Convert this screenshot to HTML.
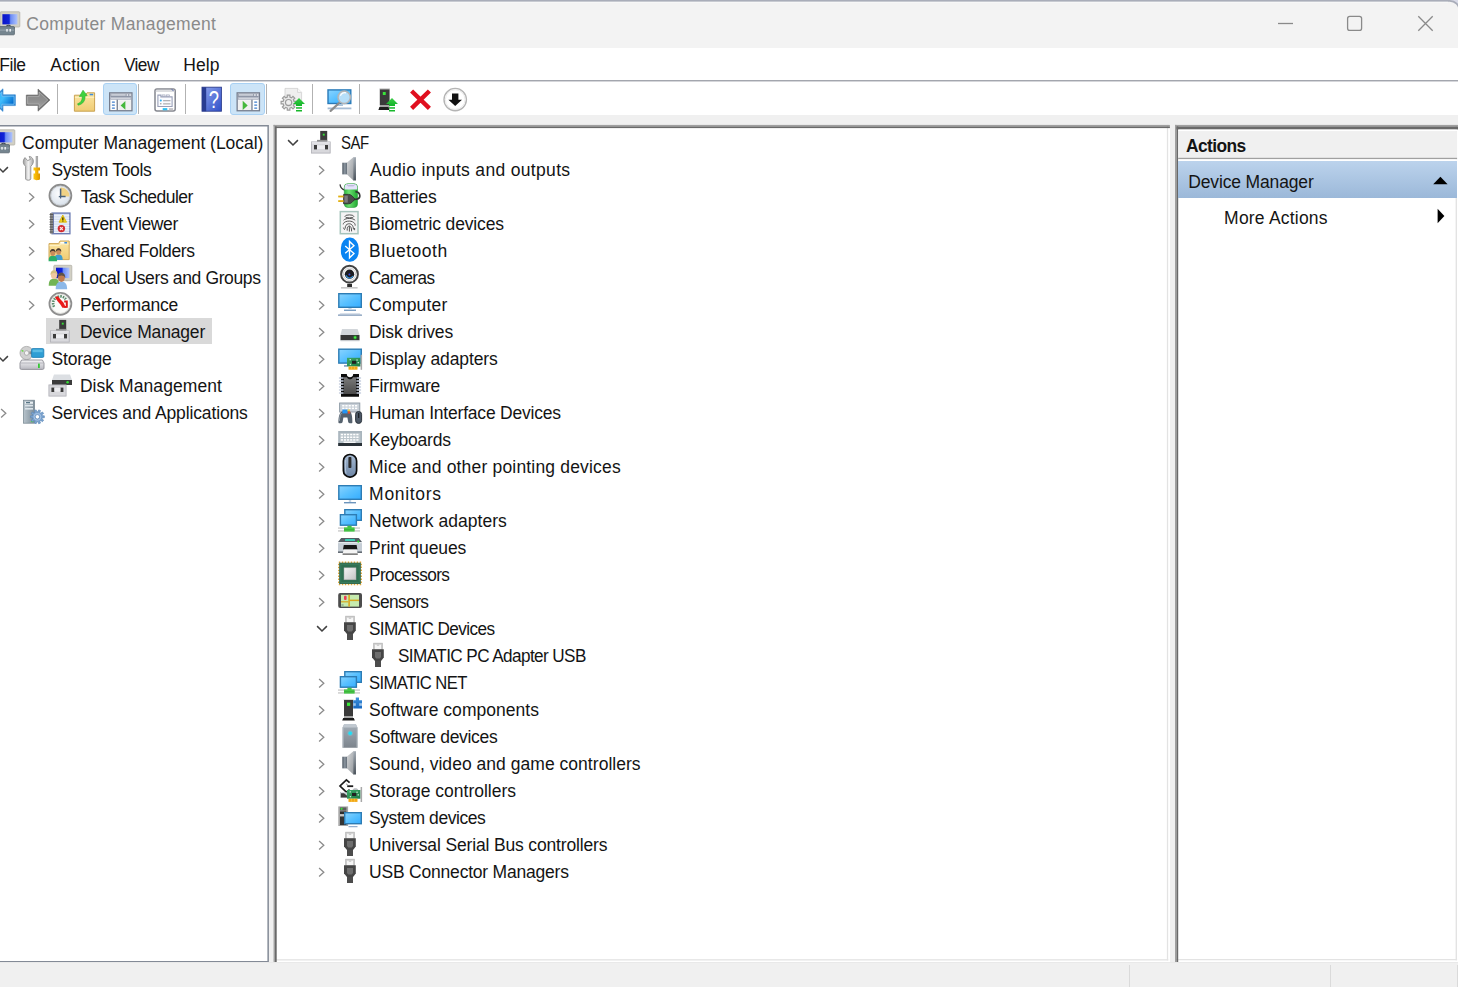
<!DOCTYPE html>
<html lang="en"><head><meta charset="utf-8"><title>Computer Management</title>
<style>
html,body{margin:0;padding:0}
body{width:1458px;height:987px;overflow:hidden;background:#f0f0f0;position:relative;font-family:"Liberation Sans",sans-serif;font-size:17.5px;color:#141414;line-height:27px}
div,svg,span{position:absolute;box-sizing:border-box}
.t{white-space:nowrap;height:27px}
svg{overflow:visible}
.pane{background:#fff}
.sep{width:1px;background:#b2b2b2;top:84px;height:30px}
.chev{fill:none;stroke:#8b8b8b;stroke-width:1.3}
.chevd{fill:none;stroke:#404040;stroke-width:1.5}
</style></head><body>

<svg width="0" height="0" style="left:0;top:0"><defs><linearGradient id="gBlue" gradientUnits="userSpaceOnUse" x1="-4" y1="92" x2="13" y2="104"><stop offset="0" stop-color="#34b0f8"/><stop offset="0.45" stop-color="#40bcfc"/><stop offset="1" stop-color="#0068cc"/></linearGradient><linearGradient id="gGray" x1="0" y1="0" x2="0" y2="1"><stop offset="0" stop-color="#8a8a8a"/><stop offset="0.5" stop-color="#8e8e8e"/><stop offset="1" stop-color="#a2a2a2"/></linearGradient><linearGradient id="gFold" x1="0" y1="0" x2="0" y2="1"><stop offset="0" stop-color="#fbe6a4"/><stop offset="1" stop-color="#f0cc74"/></linearGradient><linearGradient id="gHelp" x1="0" y1="0" x2="1" y2="1"><stop offset="0" stop-color="#8ea4ee"/><stop offset="1" stop-color="#3050c8"/></linearGradient><linearGradient id="gScr" x1="0" y1="0" x2="1" y2="1"><stop offset="0" stop-color="#8ad4ff"/><stop offset="0.5" stop-color="#58c0ff"/><stop offset="1" stop-color="#34acff"/></linearGradient><linearGradient id="gGreenA" x1="0" y1="0" x2="0" y2="1"><stop offset="0" stop-color="#3ccc48"/><stop offset="1" stop-color="#12b428"/></linearGradient><linearGradient id="gCrt" x1="0" y1="0" x2="1" y2="0"><stop offset="0" stop-color="#0a14c8"/><stop offset="0.45" stop-color="#1024d8"/><stop offset="0.55" stop-color="#6c8cf4"/><stop offset="1" stop-color="#b0c4fc"/></linearGradient><linearGradient id="gMetal" x1="0" y1="0" x2="1" y2="0"><stop offset="0" stop-color="#9c9c9c"/><stop offset="0.5" stop-color="#f2f2f2"/><stop offset="1" stop-color="#a8a8a8"/></linearGradient><linearGradient id="gYel" x1="0" y1="0" x2="1" y2="0"><stop offset="0" stop-color="#f8c818"/><stop offset="0.5" stop-color="#f4b000"/><stop offset="1" stop-color="#d89400"/></linearGradient><radialGradient id="gFace" cx="0.45" cy="0.4" r="0.7"><stop offset="0" stop-color="#fdfdfe"/><stop offset="1" stop-color="#cfdae6"/></radialGradient><linearGradient id="gTower" x1="0" y1="0" x2="1" y2="0"><stop offset="0" stop-color="#b8c4cc"/><stop offset="1" stop-color="#7c8c98"/></linearGradient><linearGradient id="gHdd" x1="0" y1="0" x2="0" y2="1"><stop offset="0" stop-color="#f4f4f6"/><stop offset="1" stop-color="#b8b8c0"/></linearGradient><linearGradient id="gSpkB" x1="0" y1="0" x2="1" y2="0"><stop offset="0" stop-color="#4e5862"/><stop offset="0.5" stop-color="#8c96a0"/><stop offset="1" stop-color="#5c6670"/></linearGradient><linearGradient id="gSpkC" x1="0" y1="0" x2="1" y2="1"><stop offset="0" stop-color="#d4d6d8"/><stop offset="1" stop-color="#989ca0"/></linearGradient><linearGradient id="gSpkR" x1="0" y1="0" x2="0" y2="1"><stop offset="0" stop-color="#a4acb4"/><stop offset="1" stop-color="#4c545c"/></linearGradient><linearGradient id="gBat" x1="0" y1="0" x2="1" y2="0"><stop offset="0" stop-color="#2eb83e"/><stop offset="0.35" stop-color="#6ce070"/><stop offset="1" stop-color="#22a832"/></linearGradient><linearGradient id="gChip" x1="0" y1="0" x2="0" y2="1"><stop offset="0" stop-color="#7a7a7a"/><stop offset="1" stop-color="#4a4a4a"/></linearGradient><linearGradient id="gMouse" x1="0" y1="0" x2="0" y2="1"><stop offset="0" stop-color="#a8bcd4"/><stop offset="1" stop-color="#6c84a4"/></linearGradient><linearGradient id="gSilver" x1="0" y1="0" x2="1" y2="1"><stop offset="0" stop-color="#f4f4f4"/><stop offset="1" stop-color="#c4c4c4"/></linearGradient><linearGradient id="gSwd" x1="0" y1="0" x2="0" y2="1"><stop offset="0" stop-color="#a4aeb8"/><stop offset="1" stop-color="#7c848c"/></linearGradient><linearGradient id="gPuz" x1="0" y1="0" x2="0" y2="1"><stop offset="0" stop-color="#3c90dc"/><stop offset="1" stop-color="#1868c0"/></linearGradient><linearGradient id="gPcb" x1="0" y1="0" x2="1" y2="1"><stop offset="0" stop-color="#3ca868"/><stop offset="1" stop-color="#1c7c44"/></linearGradient></defs></svg>
<svg style="left:0;top:0" width="1458" height="48" viewBox="0 0 1458 48"><rect x="1440" y="0" width="18" height="12" fill="#d9dbe8"/><rect x="-20" y="0.9" width="1479.4" height="60" rx="9.6" fill="#f3f3f3" stroke="#a9adb9" stroke-width="1.8"/><rect x="0" y="1.8" width="1448" height="0.8" fill="#fafafa"/></svg>
<div class="t" style="left:26.36px;top:11px;letter-spacing:0.313px;color:#8a8a8a;">Computer Management</div>
<svg style="left:-3.2px;top:12px" width="24" height="24" viewBox="0 0 24 24"><rect x="3.2" y="-0.2" width="19.6" height="15.2" rx="0.8" fill="#d2d0c4" stroke="#b4b2a8" stroke-width="0.8"/><rect x="5.4" y="2.1999999999999997" width="15.000000000000002" height="10.2" fill="url(#gCrt)"/><rect x="13" y="15" width="5" height="1.6" fill="#8c8c84"/><path d="M9.5 14.6C9.5 12.8 13.5 12.8 13.5 14.6" fill="none" stroke="#3c4650" stroke-width="1.2"/><rect x="0" y="14.6" width="17.4" height="8.2" rx="0.8" fill="#75858f" stroke="#55636d" stroke-width="0.8"/><rect x="0.4" y="17.6" width="16.6" height="1" fill="#9aa8b2"/><rect x="9.2" y="17" width="1.6" height="2.6" fill="#e8ecef"/><rect x="12.4" y="17" width="1.6" height="2.6" fill="#e8ecef"/></svg>
<svg style="left:1270px;top:8px" width="180" height="32" viewBox="1270 8 180 32"><g fill="none" stroke="#8a8a8a" stroke-width="1.3"><path d="M1278 23.5H1293"/><rect x="1347.6" y="16.4" width="14" height="14" rx="2.2"/><path d="M1418.3 16.3L1432.7 30.7M1432.7 16.3L1418.3 30.7"/></g></svg>
<div style="left:0;top:47.5px;width:1458px;height:33px;background:#fff"></div>
<div class="t" style="left:-0.80px;top:52px;letter-spacing:-0.44px;">File</div>
<div class="t" style="left:50.36px;top:52px;letter-spacing:0.176px;">Action</div>
<div class="t" style="left:124.04px;top:52px;letter-spacing:-0.6px;transform:scaleX(0.9872);transform-origin:0 0;">View</div>
<div class="t" style="left:183.34px;top:52px;letter-spacing:0.029px;">Help</div>
<div style="left:0;top:80px;width:1458px;height:2px;background:linear-gradient(#a3a6ae 0,#a3a6ae 55%,#d5d6da 55%)"></div>
<div style="left:0;top:82px;width:1458px;height:33px;background:#fff"></div>
<div class="sep" style="left:57px"></div>
<div class="sep" style="left:138px"></div>
<div class="sep" style="left:185px"></div>
<div class="sep" style="left:266.3px"></div>
<div class="sep" style="left:312.2px"></div>
<div class="sep" style="left:359.2px"></div>
<div style="left:102.5px;top:83px;width:34.2px;height:32px;background:#cce4f7;border:1px solid #a9d1f3;border-radius:3px"></div>
<div style="left:230px;top:83px;width:34.5px;height:32px;background:#cce4f7;border:1px solid #a9d1f3;border-radius:3px"></div>
<svg style="left:-10.0px;top:88.0px" width="26.0" height="24.0" viewBox="-10 88 26 24"><path d="M-9.4 100L3 88.8V94.8H15.4V105.6H3V111.4Z" fill="#3186d2" stroke="#3186d2" stroke-width="0.6" stroke-linejoin="round"/><path d="M-7.2 100L1.9 91.9V96.2H14V104.2H1.9V108.3Z" fill="url(#gBlue)" stroke="#7cc8f8" stroke-width="0.8"/></svg>
<svg style="left:25.0px;top:88.0px" width="26.0" height="24.0" viewBox="25 88 26 24"><path d="M50 100L38 89V95H26.3V105.4H38V111.2Z" fill="#6c6c6c" stroke="#6c6c6c" stroke-width="0.6" stroke-linejoin="round"/><path d="M47.8 100L39.1 92.1V96.3H27.6V104.1H39.1V108.1Z" fill="url(#gGray)" stroke="#b4b4b4" stroke-width="0.8"/></svg>
<svg style="left:73.0px;top:88.0px" width="24.0" height="25.0" viewBox="73 88 24 25"><path d="M74.4 95.2H85.5L87 92.8H94.6V111.2H74.4Z" fill="url(#gFold)" stroke="#c9a252" stroke-width="1"/><path d="M74.9 97.3H94.2" stroke="#fdf0c4" stroke-width="1"/><rect x="89.6" y="93.8" width="3.6" height="1.5" fill="#3c8ce0"/><path d="M77.6 103.8C81.2 102.6 82.6 99.6 82 96.2L79.4 96.6L83 90.2L87.2 95.6L84.9 95.9C85.6 100.8 82.6 104.2 78.2 105.2Z" fill="#3fd23f" stroke="#2cae2c" stroke-width="0.6"/></svg>
<svg style="left:108.5px;top:92.0px" width="24.0" height="19.5" viewBox="108.5 92 24 19.5"><rect x="109.15" y="92.85000000000001" width="22.3" height="17.9" fill="#fff" stroke="#747c8c" stroke-width="1.3"/><rect x="109.8" y="93.5" width="21" height="3.6" fill="#8f96a6"/><rect x="110.7" y="94.4" width="14.5" height="1.1" fill="#eef0f4"/><rect x="126.1" y="94.2" width="1.6" height="1.6" fill="#eef0f4"/><rect x="128.8" y="94.2" width="1.6" height="1.6" fill="#eef0f4"/><rect x="109.8" y="97.10000000000001" width="21" height="2.6" fill="#a4aaba"/><rect x="110.5" y="97.8" width="19.6" height="0.9" fill="#e4e6ec"/><rect x="116.1" y="99.7" width="1.3" height="10.6" fill="#747c8c"/><rect x="111.3" y="101.4" width="3.2" height="1.3" rx="0.6" fill="#3c7ccc"/><rect x="111.3" y="104.4" width="3.2" height="1.3" rx="0.6" fill="#3c7ccc"/><rect x="111.3" y="107.4" width="3.2" height="1.3" rx="0.6" fill="#3c7ccc"/><rect x="117.9" y="100.2" width="12.6" height="9.8" fill="#f0f0f0"/><path d="M120.1 105.4L124.9 101.0V109.80000000000001Z" fill="#45b83c"/></svg>
<svg style="left:153.5px;top:87.5px" width="23.0" height="24.0" viewBox="153.5 87.5 23 24"><rect x="154.5" y="88.5" width="20.2" height="22" rx="2" fill="#fff" stroke="#84868e" stroke-width="1.5"/><rect x="155.3" y="89.3" width="18.6" height="2.2" fill="#dcdde0"/><path d="M171 88.4L173 90.6" stroke="#5a6aa8" stroke-width="1"/><path d="M157.4 106V94.6H160.4V96.4H171.6V106Z" fill="#fafbff" stroke="#9aa0b8" stroke-width="1.1"/><rect x="161.6" y="94.4" width="3" height="1.4" fill="#e8e8ee" stroke="#9aa0b8" stroke-width="0.6"/><rect x="166" y="94.4" width="3" height="1.4" fill="#e8e8ee" stroke="#9aa0b8" stroke-width="0.6"/><circle cx="160.3" cy="100.1" r="1" fill="#28b0f4"/><circle cx="160.3" cy="103.3" r="0.8" fill="#9a9a9a"/><rect x="162.6" y="99.5" width="7.4" height="1.3" fill="#b2b2b6"/><rect x="162.6" y="102.7" width="7.4" height="1.3" fill="#b2b2b6"/><rect x="162.2" y="107.6" width="4.6" height="2.2" fill="#30c0f4"/><rect x="168.4" y="107.6" width="4.2" height="2.2" fill="#c4c4c8"/></svg>
<svg style="left:201.5px;top:87.0px" width="20.0" height="24.5" viewBox="201.5 87 20 24.5"><rect x="201.5" y="87.2" width="19.4" height="24" fill="url(#gHelp)"/><rect x="201.5" y="87.2" width="4.2" height="24" fill="#283c92"/><rect x="201.5" y="87.2" width="19.4" height="24" fill="none" stroke="#2c3c8c" stroke-width="0.9"/><text x="213.3" y="108" font-family="Liberation Sans,sans-serif" font-size="23" fill="#fff" text-anchor="middle" transform="translate(213.2 0) scale(0.8 1) translate(-213.2 0)">?</text></svg>
<svg style="left:235.7px;top:92.0px" width="24.0" height="19.5" viewBox="235.7 92 24 19.5"><rect x="236.85" y="92.85000000000001" width="22.3" height="17.9" fill="#fff" stroke="#747c8c" stroke-width="1.3"/><rect x="237.5" y="93.5" width="21" height="3.6" fill="#8f96a6"/><rect x="238.39999999999998" y="94.4" width="14.5" height="1.1" fill="#eef0f4"/><rect x="253.79999999999998" y="94.2" width="1.6" height="1.6" fill="#eef0f4"/><rect x="256.5" y="94.2" width="1.6" height="1.6" fill="#eef0f4"/><rect x="237.5" y="97.10000000000001" width="21" height="2.6" fill="#a4aaba"/><rect x="238.2" y="97.8" width="19.6" height="0.9" fill="#e4e6ec"/><rect x="251.0" y="99.7" width="1.3" height="10.6" fill="#747c8c"/><rect x="253.79999999999998" y="101.4" width="3.2" height="1.3" rx="0.6" fill="#3c7ccc"/><rect x="253.79999999999998" y="104.4" width="3.2" height="1.3" rx="0.6" fill="#3c7ccc"/><rect x="253.79999999999998" y="107.4" width="3.2" height="1.3" rx="0.6" fill="#3c7ccc"/><rect x="237.79999999999998" y="100.2" width="12.8" height="9.8" fill="#f0f0f0"/><path d="M247.39999999999998 105.4L242.39999999999998 100.8V110.0Z" fill="#45b83c"/></svg>
<svg style="left:281.0px;top:88.0px" width="24.0" height="24.0" viewBox="281 88 24 24"><path d="M285 88.4H297.6L301.6 92.4V105H285Z" fill="#efefef" stroke="#cfcfcf" stroke-width="0.8"/><path d="M297.6 88.4V92.4H301.6" fill="#fafafa" stroke="#cfcfcf" stroke-width="0.8"/><path d="M296.09 101.29L296.09 103.91L294.05 103.91L293.37 105.53L294.82 106.97L292.97 108.82L291.53 107.37L289.91 108.05L289.91 110.09L287.29 110.09L287.29 108.05L285.67 107.37L284.23 108.82L282.38 106.97L283.83 105.53L283.15 103.91L281.11 103.91L281.11 101.29L283.15 101.29L283.83 99.67L282.38 98.23L284.23 96.38L285.67 97.83L287.29 97.15L287.29 95.11L289.91 95.11L289.91 97.15L291.53 97.83L292.97 96.38L294.82 98.23L293.37 99.67L294.05 101.29ZM291.70 102.60A3.1 3.1 0 1 0 285.50 102.60A3.1 3.1 0 1 0 291.70 102.60Z" fill="#e9e9e9" stroke="#9c9c9c" stroke-width="1.2" fill-rule="evenodd"/><path d="M293 104L299 98L305 104H302V106H296V104Z" fill="url(#gGreenA)"/><rect x="296" y="107.2" width="6" height="1.5" fill="#18b82c"/><rect x="296" y="110" width="6" height="1.5" fill="#18b82c"/></svg>
<svg style="left:327.0px;top:88.5px" width="25.0" height="23.0" viewBox="327 88.5 25 23"><rect x="328" y="89.4" width="22.8" height="13.6" fill="url(#gScr)" stroke="#2a7ab8" stroke-width="1.4"/><rect x="327.6" y="107" width="23.8" height="1.8" fill="#a6bcd4"/><rect x="336" y="104" width="7" height="1.2" fill="#88a8c8"/><path d="M339.6 102L330.6 110.4" stroke="#8c8c8c" stroke-width="2.2" stroke-linecap="round"/><circle cx="344.2" cy="96.8" r="6.2" fill="#bfe2f8" fill-opacity="0.92" stroke="#b4b4b4" stroke-width="1.5"/><path d="M340.4 95.2A4.4 4.4 0 0 1 346 92.4" stroke="#fff" stroke-width="1.2" fill="none"/></svg>
<svg style="left:378.0px;top:88.0px" width="20.0" height="24.0" viewBox="378 88 20 24"><rect x="379.8" y="88.8" width="9.8" height="16.2" fill="#3a3a3a"/><rect x="379.4" y="88.4" width="10.6" height="1" fill="#d8d8d8"/><rect x="382.8" y="92" width="2.9" height="3" fill="#39e639"/><rect x="379.8" y="105" width="9.8" height="2" fill="#a4a4a4"/><path d="M379.4 107H388.6L389.4 110H378.4Z" fill="#1e1e1e"/><path d="M386 104L392 98L398 104H395V106H389V104Z" fill="url(#gGreenA)"/><rect x="389" y="107.2" width="6" height="1.5" fill="#18b82c"/><rect x="389" y="110" width="6" height="1.5" fill="#18b82c"/></svg>
<svg style="left:410.0px;top:90.0px" width="21.0" height="20.0" viewBox="410 90 21 20"><path d="M411.6 91L429.4 108.4M429.4 91L411.6 108.4" stroke="#e00f1f" stroke-width="4.4"/></svg>
<svg style="left:442.8px;top:88.0px" width="24.0" height="24.0" viewBox="442.8 88 24 24"><circle cx="455" cy="99.6" r="11.2" fill="#fff" stroke="#b4b4b4" stroke-width="1.4"/><circle cx="455" cy="99.6" r="9.8" fill="none" stroke="#ececec" stroke-width="1"/><path d="M451.8 93.4H458.2V99.8H461.8L455 106L448.2 99.8H451.8Z" fill="#111"/></svg>
<svg style="left:0;top:0" width="1458" height="987" viewBox="0 0 1458 987"><rect x="-5" y="125.75" width="273.15" height="836" fill="#fff" stroke="#838a96" stroke-width="1.5"/><rect x="273.50" y="124.90" width="896.40" height="837.30" fill="#fff"/><rect x="273.50" y="959.20" width="896.40" height="1.50" fill="#e3e3e3"/><rect x="1166.90" y="124.90" width="1.50" height="837.30" fill="#e3e3e3"/><rect x="273.50" y="960.70" width="896.40" height="1.50" fill="#fff"/><rect x="1168.40" y="124.90" width="1.50" height="837.30" fill="#fff"/><rect x="273.50" y="124.90" width="896.40" height="1.50" fill="#a0a0a0"/><rect x="273.50" y="124.90" width="1.50" height="837.30" fill="#a0a0a0"/><rect x="275.00" y="126.40" width="894.90" height="1.70" fill="#696969"/><rect x="275.00" y="126.40" width="1.70" height="835.80" fill="#696969"/><rect x="1175.00" y="124.90" width="283.60" height="837.10" fill="#fff"/><rect x="1175.00" y="959.00" width="283.60" height="1.50" fill="#e3e3e3"/><rect x="1455.60" y="124.90" width="1.50" height="837.10" fill="#e3e3e3"/><rect x="1175.00" y="960.50" width="283.60" height="1.50" fill="#fff"/><rect x="1457.10" y="124.90" width="1.50" height="837.10" fill="#fff"/><rect x="1175.00" y="124.90" width="283.60" height="1.50" fill="#a0a0a0"/><rect x="1175.00" y="124.90" width="1.50" height="837.10" fill="#a0a0a0"/><rect x="1176.50" y="126.40" width="282.10" height="3.10" fill="#696969"/><rect x="1176.50" y="126.40" width="1.70" height="835.60" fill="#696969"/></svg>
<div style="left:46px;top:317.5px;width:166px;height:26.5px;background:#d9d9d9"></div>
<div class="t" style="left:22.12px;top:130px;letter-spacing:-0.035px;">Computer Management (Local)</div>
<svg style="left:-8px;top:130px" width="24" height="24" viewBox="0 0 24 24"><rect x="3.2" y="-0.2" width="19.6" height="15.2" rx="0.8" fill="#d2d0c4" stroke="#b4b2a8" stroke-width="0.8"/><rect x="5.4" y="2.1999999999999997" width="15.000000000000002" height="10.2" fill="url(#gCrt)"/><rect x="13" y="15" width="5" height="1.6" fill="#8c8c84"/><path d="M9.5 14.6C9.5 12.8 13.5 12.8 13.5 14.6" fill="none" stroke="#3c4650" stroke-width="1.2"/><rect x="0" y="14.6" width="17.4" height="8.2" rx="0.8" fill="#75858f" stroke="#55636d" stroke-width="0.8"/><rect x="0.4" y="17.6" width="16.6" height="1" fill="#9aa8b2"/><rect x="9.2" y="17" width="1.6" height="2.6" fill="#e8ecef"/><rect x="12.4" y="17" width="1.6" height="2.6" fill="#e8ecef"/></svg>
<div class="t" style="left:51.58px;top:157px;letter-spacing:-0.315px;">System Tools</div>
<svg style="left:20px;top:157px" width="24" height="24" viewBox="0 0 24 24"><path d="M5.6 9.2C3.2 7.6 2.6 4.4 4 2L5 0.6L7.6 3.6L10.4 2.4L9.2 -0.6C12 -0.4 14 2.6 13.2 5.6C12.8 7.2 12 8.4 10.8 9.2V22C10.8 23.6 5.6 23.6 5.6 22Z" fill="url(#gMetal)" stroke="#8e8e8e" stroke-width="0.9"/><rect x="16" y="-0.5" width="1.8" height="11.2" fill="#b4b4b4" stroke="#8a8a8a" stroke-width="0.5"/><path d="M13.5 10.6H20V13.4H18.4V16.4H20V22C20 23.6 13.5 23.6 13.5 22V16.4H15.1V13.4H13.5Z" fill="url(#gYel)"/></svg>
<svg style="left:-3px;top:163px" width="12" height="12" viewBox="-6 -6 12 12"><path class="chevd" d="M-4.9 -1.9L0 3L4.9 -1.9"/></svg>
<div class="t" style="left:80.70px;top:184px;letter-spacing:-0.544px;">Task Scheduler</div>
<svg style="left:48px;top:184px" width="24" height="24" viewBox="0 0 24 24"><circle cx="12.4" cy="11.6" r="10.9" fill="url(#gFace)" stroke="#8c8c8c" stroke-width="1.9"/><circle cx="12.4" cy="11.6" r="9.6" fill="none" stroke="#c4c8cc" stroke-width="0.8"/><path d="M12.6 12.4V3.2A9.2 9.2 0 0 1 21.6 12.4Z" fill="#f0d284"/><path d="M12.6 4.6V12.6H17.6" fill="none" stroke="#4a627a" stroke-width="1.5"/><path d="M12.6 12.6V14.6M10.8 12.6H12.6" stroke="#4a627a" stroke-width="1.2"/></svg>
<svg style="left:25.5px;top:189px" width="12" height="14" viewBox="-6 -7 12 14"><path class="chev" d="M-2.9 -2.9L1.8 1.3L-2.9 5.5"/></svg>
<div class="t" style="left:79.90px;top:211px;letter-spacing:-0.401px;">Event Viewer</div>
<svg style="left:48px;top:211px" width="24" height="24" viewBox="0 0 24 24"><rect x="3.4" y="1.4" width="19.2" height="22" fill="#6c7cb4"/><rect x="6" y="2.8" width="15.2" height="19.2" fill="#d4dff2"/><rect x="6" y="4.2" width="15.2" height="1" fill="#f0f4fb"/><rect x="6" y="6.6" width="15.2" height="1" fill="#f0f4fb"/><rect x="6" y="9.0" width="15.2" height="1" fill="#f0f4fb"/><rect x="6" y="11.399999999999999" width="15.2" height="1" fill="#f0f4fb"/><rect x="6" y="13.8" width="15.2" height="1" fill="#f0f4fb"/><rect x="6" y="16.2" width="15.2" height="1" fill="#f0f4fb"/><rect x="6" y="18.599999999999998" width="15.2" height="1" fill="#f0f4fb"/><rect x="6" y="21.0" width="15.2" height="1" fill="#f0f4fb"/><rect x="2" y="2" width="3.2" height="20.6" fill="#8a8a8a"/><rect x="1.6" y="3.0" width="3.6" height="1" fill="#5a5a5a"/><rect x="1.6" y="5.5" width="3.6" height="1" fill="#5a5a5a"/><rect x="1.6" y="8.0" width="3.6" height="1" fill="#5a5a5a"/><rect x="1.6" y="10.5" width="3.6" height="1" fill="#5a5a5a"/><rect x="1.6" y="13.0" width="3.6" height="1" fill="#5a5a5a"/><rect x="1.6" y="15.5" width="3.6" height="1" fill="#5a5a5a"/><rect x="1.6" y="18.0" width="3.6" height="1" fill="#5a5a5a"/><rect x="1.6" y="20.5" width="3.6" height="1" fill="#5a5a5a"/><path d="M14.8 4L18.6 11.2H11Z" fill="#f2d21c" stroke="#d8b40c" stroke-width="0.8" stroke-linejoin="round"/><rect x="14.2" y="6.4" width="1.3" height="2.6" fill="#3a3200"/><rect x="14.2" y="9.5" width="1.3" height="1" fill="#3a3200"/><circle cx="13.4" cy="17.6" r="3.7" fill="#d42c30"/><path d="M12 16.2L14.8 19M14.8 16.2L12 19" stroke="#fbe4e4" stroke-width="1.2"/></svg>
<svg style="left:25.5px;top:216px" width="12" height="14" viewBox="-6 -7 12 14"><path class="chev" d="M-2.9 -2.9L1.8 1.3L-2.9 5.5"/></svg>
<div class="t" style="left:79.90px;top:238px;letter-spacing:-0.344px;">Shared Folders</div>
<svg style="left:48px;top:238px" width="24" height="24" viewBox="0 0 24 24"><path d="M1 5.6H10.6L12 3H21.2V21.6H1Z" fill="url(#gFold)" stroke="#d0a858" stroke-width="1"/><path d="M1.5 7.6H11.5L12.6 6H20.7" fill="none" stroke="#fdf2c8" stroke-width="1"/><rect x="12.4" y="4" width="4" height="1.5" fill="#fff"/><rect x="16.4" y="4" width="2.6" height="1.5" fill="#3c8ce0"/><path d="M6.544 21.880000000000003C6.544 17.59 8.26 16.576 10.6 16.576C12.94 16.576 14.655999999999999 17.59 14.655999999999999 21.880000000000003Z" fill="#3c9cd0"/><ellipse cx="10.6" cy="13.456" rx="2.418" ry="3.2760000000000002" fill="#c88c5c"/><path d="M7.869999999999999 13.768C7.558 8.932 13.642 8.932 13.33 13.768C12.315999999999999 11.584 8.884 11.584 7.869999999999999 13.768Z" fill="#463c30"/><path d="M0.5359999999999996 23.32C0.5359999999999996 18.81 2.34 17.744 4.8 17.744C7.26 17.744 9.064 18.81 9.064 23.32Z" fill="#2cae68"/><ellipse cx="4.8" cy="14.463999999999999" rx="2.542" ry="3.444" fill="#c88c5c"/><path d="M1.9300000000000002 14.791999999999998C1.6019999999999999 9.708 7.997999999999999 9.708 7.67 14.791999999999998C6.604 12.495999999999999 2.9959999999999996 12.495999999999999 1.9300000000000002 14.791999999999998Z" fill="#463c30"/></svg>
<svg style="left:25.5px;top:243px" width="12" height="14" viewBox="-6 -7 12 14"><path class="chev" d="M-2.9 -2.9L1.8 1.3L-2.9 5.5"/></svg>
<div class="t" style="left:79.90px;top:265px;letter-spacing:-0.364px;">Local Users and Groups</div>
<svg style="left:48px;top:265px" width="24" height="24" viewBox="0 0 24 24"><rect x="5.8" y="0.3" width="18" height="15.4" rx="0.8" fill="#d2d0c4" stroke="#b4b2a8" stroke-width="0.8"/><rect x="8.0" y="2.6999999999999997" width="13.4" height="10.4" fill="url(#gCrt)"/><path d="M0.6959999999999997 20.72C0.6959999999999997 15.110000000000001 2.94 13.783999999999999 6 13.783999999999999C9.06 13.783999999999999 11.304 15.110000000000001 11.304 20.72Z" fill="#72b454"/><ellipse cx="6" cy="9.704" rx="3.1620000000000004" ry="4.284000000000001" fill="#f0c8a0"/><path d="M2.4299999999999997 10.112C2.0220000000000002 3.7880000000000003 9.978 3.7880000000000003 9.57 10.112C8.244 7.256 3.756 7.256 2.4299999999999997 10.112Z" fill="#d4c080"/><path d="M7.68 24.200000000000003C7.68 18.15 10.1 16.72 13.4 16.72C16.7 16.72 19.12 18.15 19.12 24.200000000000003Z" fill="#8cb8e8"/><ellipse cx="13.4" cy="12.32" rx="3.4100000000000006" ry="4.620000000000001" fill="#c07c50"/><path d="M9.55 12.76C9.11 5.9399999999999995 17.69 5.9399999999999995 17.25 12.76C15.82 9.68 10.98 9.68 9.55 12.76Z" fill="#5c5248"/></svg>
<svg style="left:25.5px;top:270px" width="12" height="14" viewBox="-6 -7 12 14"><path class="chev" d="M-2.9 -2.9L1.8 1.3L-2.9 5.5"/></svg>
<div class="t" style="left:79.90px;top:292px;letter-spacing:-0.176px;">Performance</div>
<svg style="left:48px;top:292px" width="24" height="24" viewBox="0 0 24 24"><circle cx="12.4" cy="11.8" r="10.9" fill="#fbfbf9" stroke="#8e8e8e" stroke-width="1.9"/><circle cx="12.4" cy="11.8" r="9.6" fill="none" stroke="#d8d8d4" stroke-width="0.8"/><path d="M6 14.8A7 7 0 0 1 18 7.6" fill="none" stroke="#5a8a6a" stroke-width="2.6" stroke-dasharray="1.5 0.9"/><path d="M7 5.4L9.6 4L12.6 7.6L15.4 10.6L17 13.8L19 15.8H14.4L12.4 12.4L9.8 9.6Z" fill="#ea1a1a"/><path d="M16.2 8.6H19.8V15.8H16.2V14H17.8V10.4H16.2Z" fill="#e01818"/></svg>
<svg style="left:25.5px;top:297px" width="12" height="14" viewBox="-6 -7 12 14"><path class="chev" d="M-2.9 -2.9L1.8 1.3L-2.9 5.5"/></svg>
<div class="t" style="left:79.90px;top:319px;letter-spacing:-0.157px;">Device Manager</div>
<svg style="left:48px;top:319px" width="24" height="24" viewBox="0 0 24 24"><rect x="11.2" y="0.9" width="7" height="10.2" fill="#3b3b3b"/><rect x="13.8" y="3.7" width="1.9" height="1.9" fill="#34e034"/><rect x="8" y="9.9" width="10.2" height="2" fill="#8e8e8e"/><rect x="2.4" y="11.9" width="18.8" height="11.2" fill="#d8d8dc" stroke="#b0b0b6" stroke-width="0.8"/><rect x="2.8" y="12.3" width="18" height="1.2" fill="#ececf0"/><rect x="5" y="15" width="3" height="4.4" fill="#3b3b3b"/><rect x="16" y="15" width="3" height="4.4" fill="#3b3b3b"/><rect x="8" y="15.4" width="8" height="3.6" fill="#ededf1"/></svg>
<div class="t" style="left:51.58px;top:346px;letter-spacing:-0.206px;">Storage</div>
<svg style="left:20px;top:346px" width="24" height="24" viewBox="0 0 24 24"><circle cx="6.6" cy="7" r="6.6" fill="#d0d0d0" stroke="#a4a4a4" stroke-width="0.8"/><circle cx="6.6" cy="7" r="2.3" fill="#f4f4f4" stroke="#9c9c9c" stroke-width="0.7"/><path d="M1.6 4.4L3.4 5.4" stroke="#68d848" stroke-width="1.4"/><rect x="9.4" y="5.4" width="3" height="2.8" fill="#8c8c8c"/><rect x="11.6" y="2.6" width="12.2" height="8.8" rx="1.2" fill="#2f9ed4" stroke="#1c7cb4" stroke-width="0.8"/><rect x="12.6" y="3.6" width="10" height="2.6" fill="#5cbce4"/><path d="M1.6 14H22.4L24 17V22.2C24 23 23.2 23.4 22.6 23.4H1.4C0.6 23.4 0 23 0 22.2V17Z" fill="url(#gHdd)" stroke="#8e8e96" stroke-width="0.9"/><path d="M0.4 17H23.6" stroke="#a8a8b0" stroke-width="0.7"/><rect x="18" y="17.6" width="1.8" height="4.4" fill="#34c834"/></svg>
<svg style="left:-3px;top:352px" width="12" height="12" viewBox="-6 -6 12 12"><path class="chevd" d="M-4.9 -1.9L0 3L4.9 -1.9"/></svg>
<div class="t" style="left:79.90px;top:373px;letter-spacing:0.065px;">Disk Management</div>
<svg style="left:48px;top:373px" width="24" height="24" viewBox="0 0 24 24"><path d="M6 1.4H22L24 7V12H4V7Z" fill="#dcdfe3"/><rect x="4" y="7" width="20" height="5" fill="#3c3c3c"/><circle cx="19.6" cy="9.2" r="1.3" fill="#34e034"/><rect x="0.9" y="11.9" width="17.2" height="11.2" fill="#d8d8dc" stroke="#b0b0b6" stroke-width="0.8"/><rect x="3.4" y="14.6" width="3" height="4.4" fill="#3b3b3b"/><rect x="12.4" y="14.6" width="3" height="4.4" fill="#3b3b3b"/><rect x="6.4" y="15" width="6" height="3.6" fill="#ededf1"/></svg>
<div class="t" style="left:51.58px;top:400px;letter-spacing:-0.131px;">Services and Applications</div>
<svg style="left:20px;top:400px" width="24" height="24" viewBox="0 0 24 24"><rect x="3.4" y="0.2" width="11.2" height="23" fill="url(#gTower)" stroke="#74848e" stroke-width="0.7"/><rect x="5" y="1.6" width="8" height="2.2" fill="#e8eef2"/><rect x="6" y="2.2" width="4" height="1" fill="#34586c"/><rect x="5" y="4.8" width="8" height="1.6" fill="#dce4ea"/><rect x="5" y="8" width="8" height="1.6" fill="#dce4ea"/><rect x="11" y="21" width="2.4" height="1.1" fill="#54d84c"/><path d="M24.33 15.84L24.33 17.76L22.31 17.74L21.92 18.93L23.58 20.09L22.44 21.66L20.82 20.44L19.81 21.18L20.46 23.10L18.63 23.69L18.03 21.76L16.77 21.76L16.17 23.69L14.34 23.10L14.99 21.18L13.98 20.44L12.36 21.66L11.22 20.09L12.88 18.93L12.49 17.74L10.47 17.76L10.47 15.84L12.49 15.86L12.88 14.67L11.22 13.51L12.36 11.94L13.98 13.16L14.99 12.42L14.34 10.50L16.17 9.91L16.77 11.84L18.03 11.84L18.63 9.91L20.46 10.50L19.81 12.42L20.82 13.16L22.44 11.94L23.58 13.51L21.92 14.67L22.31 15.86ZM19.60 16.80A2.2 2.2 0 1 0 15.20 16.80A2.2 2.2 0 1 0 19.60 16.80Z" fill="#7ca4d0" stroke="#5c88b8" stroke-width="0.7" fill-rule="evenodd"/><circle cx="17.4" cy="16.8" r="3.4" fill="none" stroke="#a8c4e4" stroke-width="1"/></svg>
<svg style="left:-1.9000000000000004px;top:405px" width="12" height="14" viewBox="-6 -7 12 14"><path class="chev" d="M-2.9 -2.9L1.8 1.3L-2.9 5.5"/></svg>
<div class="t" style="left:341.02px;top:130px;letter-spacing:-0.6px;transform:scaleX(0.8546);transform-origin:0 0;">SAF</div>
<svg style="left:309px;top:130px" width="24" height="24" viewBox="0 0 24 24"><rect x="11.2" y="0.9" width="7" height="10.2" fill="#3b3b3b"/><rect x="13.8" y="3.7" width="1.9" height="1.9" fill="#34e034"/><rect x="8" y="9.9" width="10.2" height="2" fill="#8e8e8e"/><rect x="2.4" y="11.9" width="18.8" height="11.2" fill="#d8d8dc" stroke="#b0b0b6" stroke-width="0.8"/><rect x="2.8" y="12.3" width="18" height="1.2" fill="#ececf0"/><rect x="5" y="15" width="3" height="4.4" fill="#3b3b3b"/><rect x="16" y="15" width="3" height="4.4" fill="#3b3b3b"/><rect x="8" y="15.4" width="8" height="3.6" fill="#ededf1"/></svg>
<svg style="left:287px;top:136px" width="12" height="12" viewBox="-6 -6 12 12"><path class="chevd" d="M-4.9 -1.9L0 3L4.9 -1.9"/></svg>
<div class="t" style="left:369.92px;top:157px;letter-spacing:0.327px;">Audio inputs and outputs</div>
<svg style="left:338px;top:157px" width="24" height="24" viewBox="0 0 24 24"><rect x="4.3" y="5.7" width="5" height="11.7" fill="url(#gSpkB)"/><path d="M9 5.6L15.4 0.2V23.5L9 17.5Z" fill="url(#gSpkC)"/><rect x="15.2" y="0.2" width="2.8" height="23.3" fill="url(#gSpkR)"/></svg>
<svg style="left:315.5px;top:162px" width="12" height="14" viewBox="-6 -7 12 14"><path class="chev" d="M-2.9 -2.9L1.8 1.3L-2.9 5.5"/></svg>
<div class="t" style="left:369.12px;top:184px;letter-spacing:-0.193px;">Batteries</div>
<svg style="left:338px;top:184px" width="24" height="24" viewBox="0 0 24 24"><path d="M2 0.4C2.4 3.6 4 5.4 7 6.2" fill="none" stroke="#3a3a3a" stroke-width="1.3"/><rect x="6.3" y="-0.3" width="13.2" height="23.7" rx="3.4" fill="url(#gBat)" stroke="#28983a" stroke-width="0.6"/><path d="M6.6 5.6V3.2C6.6 1 8 0 9.6 0H16.2C17.8 0 19.2 1 19.2 3.2V5.6Z" fill="#e4e2fa"/><path d="M9 0.6L10.4 1.8H15.4L16.8 0.6" fill="none" stroke="#a8a4c8" stroke-width="0.9"/><path d="M17.4 7.6C22.6 8 23.4 14.4 18.6 15.2L14 15.6" fill="none" stroke="#333" stroke-width="1.7"/><path d="M5.6 10.4H10.6C13.2 10.4 14.6 12.6 16.4 14.4V15.8C14.6 17.6 13.2 19.8 10.6 19.8H5.6Z" fill="#4a4a4a" stroke="#2c2c2c" stroke-width="0.8"/><rect x="6.4" y="11.6" width="3.4" height="7" fill="#7c7c7c"/><rect x="0.2" y="11.6" width="5.4" height="1.8" fill="#e2b010"/><rect x="0.2" y="16.2" width="5.4" height="1.8" fill="#e2b010"/></svg>
<svg style="left:315.5px;top:189px" width="12" height="14" viewBox="-6 -7 12 14"><path class="chev" d="M-2.9 -2.9L1.8 1.3L-2.9 5.5"/></svg>
<div class="t" style="left:369.12px;top:211px;letter-spacing:-0.136px;">Biometric devices</div>
<svg style="left:338px;top:211px" width="24" height="24" viewBox="0 0 24 24"><rect x="2.3" y="0.6" width="17.7" height="22.1" fill="#f4f4f4" stroke="#a6c4bc" stroke-width="1.5"/><g fill="none" stroke="#4c4c4c" stroke-width="0.95"><ellipse cx="11.4" cy="5.4" rx="4.4" ry="1.5"/><path d="M5.6 9.2C7.6 6.8 15.2 6.8 17.2 9.4"/><path d="M5.2 13.4C5.4 9 17.4 8.6 17.2 14.6"/><path d="M7.2 17.6C6.6 11.4 15.6 10.6 15.4 18.4"/><path d="M9.2 19.6C8.6 13.6 13.8 13 13.6 20.4"/><path d="M11.4 20.6V15.4"/><path d="M5.4 16.6L6.6 18.8M16.6 17V19.2"/></g></svg>
<svg style="left:315.5px;top:216px" width="12" height="14" viewBox="-6 -7 12 14"><path class="chev" d="M-2.9 -2.9L1.8 1.3L-2.9 5.5"/></svg>
<div class="t" style="left:369.12px;top:238px;letter-spacing:0.516px;">Bluetooth</div>
<svg style="left:338px;top:238px" width="24" height="24" viewBox="0 0 24 24"><rect x="2.9" y="-0.4" width="17.8" height="24.2" rx="8.6" ry="10.4" fill="#0a84f2"/><path d="M7.2 7.9L16 15.5L11.5 19.8V3.4L16 7.8L7.2 15.3" fill="none" stroke="#fff" stroke-width="1.35" stroke-linejoin="miter"/></svg>
<svg style="left:315.5px;top:243px" width="12" height="14" viewBox="-6 -7 12 14"><path class="chev" d="M-2.9 -2.9L1.8 1.3L-2.9 5.5"/></svg>
<div class="t" style="left:369.12px;top:265px;letter-spacing:-0.6px;transform:scaleX(0.9787);transform-origin:0 0;">Cameras</div>
<svg style="left:338px;top:265px" width="24" height="24" viewBox="0 0 24 24"><circle cx="11.5" cy="9.2" r="8.4" fill="#fafafa" stroke="#424242" stroke-width="2"/><circle cx="11.5" cy="9.2" r="6.2" fill="none" stroke="#c8c8c8" stroke-width="0.9"/><circle cx="11.5" cy="9.2" r="4.7" fill="#1c1c20"/><path d="M8 10.4A3.8 3.8 0 0 0 15 11" fill="none" stroke="#3c94d8" stroke-width="1.3"/><circle cx="11.4" cy="9.4" r="1" fill="#3848e0"/><rect x="9.2" y="18.8" width="4.8" height="3.2" fill="#2c2c2c"/><rect x="3" y="22" width="16.6" height="1.6" fill="#c6c6c6"/></svg>
<svg style="left:315.5px;top:270px" width="12" height="14" viewBox="-6 -7 12 14"><path class="chev" d="M-2.9 -2.9L1.8 1.3L-2.9 5.5"/></svg>
<div class="t" style="left:369.12px;top:292px;letter-spacing:0.192px;">Computer</div>
<svg style="left:338px;top:292px" width="24" height="24" viewBox="0 0 24 24"><rect x="0.7999999999999999" y="1.7" width="22.5" height="13.6" fill="url(#gScr)" stroke="#2d7cb4" stroke-width="1.4"/><rect x="6" y="17.6" width="12" height="1.3" fill="#6c94bc"/><rect x="10.4" y="16" width="3.2" height="1.6" fill="#c4d4e4"/><path d="M2.4 21H21.6L24 23.8H0Z" fill="#d8e0ea"/><rect x="0" y="22.4" width="24" height="1.6" fill="#9cb0c8"/></svg>
<svg style="left:315.5px;top:297px" width="12" height="14" viewBox="-6 -7 12 14"><path class="chev" d="M-2.9 -2.9L1.8 1.3L-2.9 5.5"/></svg>
<div class="t" style="left:369.12px;top:319px;letter-spacing:-0.149px;">Disk drives</div>
<svg style="left:338px;top:319px" width="24" height="24" viewBox="0 0 24 24"><path d="M4 10H19.6L21.5 16H2.5Z" fill="#d2d6da"/><rect x="2.5" y="16" width="19" height="5.2" fill="#363636"/><rect x="2.5" y="21.2" width="19" height="1" fill="#c4c8cc"/><circle cx="17.1" cy="18.5" r="2.2" fill="#2a8c2a" fill-opacity="0.6"/><circle cx="17.1" cy="18.5" r="1.2" fill="#40f040"/></svg>
<svg style="left:315.5px;top:324px" width="12" height="14" viewBox="-6 -7 12 14"><path class="chev" d="M-2.9 -2.9L1.8 1.3L-2.9 5.5"/></svg>
<div class="t" style="left:369.12px;top:346px;letter-spacing:-0.115px;">Display adapters</div>
<svg style="left:338px;top:346px" width="24" height="24" viewBox="0 0 24 24"><rect x="0.7999999999999999" y="3.2" width="22.5" height="13.9" fill="url(#gScr)" stroke="#2d7cb4" stroke-width="1.4"/><rect x="6" y="19" width="3.2" height="1.8" fill="#90a4c4"/><rect x="9" y="11.8" width="13.5" height="8.7" fill="url(#gPcb)"/><rect x="14" y="14.8" width="4.2" height="3" fill="#222"/><rect x="11.6" y="13.0" width="1.3" height="1.3" fill="#cfe8d8"/><rect x="18.4" y="13.4" width="1.3" height="1.3" fill="#cfe8d8"/><rect x="19.6" y="16.0" width="1.3" height="1.3" fill="#cfe8d8"/><rect x="11.8" y="17.8" width="1.3" height="1.3" fill="#cfe8d8"/><rect x="10.5" y="20.5" width="9" height="3.2" fill="#f2a814"/><path d="M13.5 20.5V23.700000000000003M16.5 20.5V23.700000000000003" stroke="#f8c850" stroke-width="0.6"/><rect x="22.6" y="8.8" width="1.5" height="15" fill="#a8a8a8"/></svg>
<svg style="left:315.5px;top:351px" width="12" height="14" viewBox="-6 -7 12 14"><path class="chev" d="M-2.9 -2.9L1.8 1.3L-2.9 5.5"/></svg>
<div class="t" style="left:369.12px;top:373px;letter-spacing:-0.262px;">Firmware</div>
<svg style="left:338px;top:373px" width="24" height="24" viewBox="0 0 24 24"><path d="M3 1H8.8C8.8 5.4 15.2 5.4 15.2 1H21V23.7H3Z" fill="#0c0c0c"/><path d="M6 4.2H9C10 7 14 7 15 4.2H18V21H6Z" fill="url(#gChip)"/><rect x="0.8" y="4.2" width="5" height="1.5" rx="0.7" fill="#c4ccdc"/><rect x="18.2" y="4.2" width="5" height="1.5" rx="0.7" fill="#c4ccdc"/><rect x="0.8" y="7.2" width="5" height="1.5" rx="0.7" fill="#c4ccdc"/><rect x="18.2" y="7.2" width="5" height="1.5" rx="0.7" fill="#c4ccdc"/><rect x="0.8" y="10.2" width="5" height="1.5" rx="0.7" fill="#c4ccdc"/><rect x="18.2" y="10.2" width="5" height="1.5" rx="0.7" fill="#c4ccdc"/><rect x="0.8" y="13.2" width="5" height="1.5" rx="0.7" fill="#c4ccdc"/><rect x="18.2" y="13.2" width="5" height="1.5" rx="0.7" fill="#c4ccdc"/><rect x="0.8" y="16.2" width="5" height="1.5" rx="0.7" fill="#c4ccdc"/><rect x="18.2" y="16.2" width="5" height="1.5" rx="0.7" fill="#c4ccdc"/><rect x="0.8" y="19.2" width="5" height="1.5" rx="0.7" fill="#c4ccdc"/><rect x="18.2" y="19.2" width="5" height="1.5" rx="0.7" fill="#c4ccdc"/></svg>
<svg style="left:315.5px;top:378px" width="12" height="14" viewBox="-6 -7 12 14"><path class="chev" d="M-2.9 -2.9L1.8 1.3L-2.9 5.5"/></svg>
<div class="t" style="left:369.12px;top:400px;letter-spacing:-0.205px;">Human Interface Devices</div>
<svg style="left:338px;top:400px" width="24" height="24" viewBox="0 0 24 24"><rect x="1.6" y="3" width="20.2" height="9" fill="#c8d0d8" stroke="#8c98a4" stroke-width="0.9"/><rect x="4.2" y="5.0" width="2.2" height="1.5" fill="#fff"/><rect x="7.4" y="5.0" width="2.2" height="1.5" fill="#fff"/><rect x="10.600000000000001" y="5.0" width="2.2" height="1.5" fill="#fff"/><rect x="13.8" y="5.0" width="2.2" height="1.5" fill="#fff"/><rect x="17.0" y="5.0" width="2.2" height="1.5" fill="#fff"/><rect x="4.2" y="7.6" width="2.2" height="1.5" fill="#fff"/><rect x="7.4" y="7.6" width="2.2" height="1.5" fill="#fff"/><rect x="10.600000000000001" y="7.6" width="2.2" height="1.5" fill="#fff"/><rect x="13.8" y="7.6" width="2.2" height="1.5" fill="#fff"/><rect x="17.0" y="7.6" width="2.2" height="1.5" fill="#fff"/><path d="M0.4 22.4C0.4 16 2 11.2 5 11.2H10.6C13.6 11.2 14.4 16 14.4 22.4C14.4 23.6 10.4 23.6 10.2 22L9.4 17.6H5.4L4.6 22C4.4 23.6 0.4 23.6 0.4 22.4Z" fill="#56626e"/><path d="M1.4 21C1.6 17 2.4 14 3.6 13" stroke="#98a4b0" stroke-width="0.9" fill="none"/><rect x="4.4" y="9.6" width="5.2" height="3.8" fill="#2494f4"/><rect x="9.6" y="9.6" width="2.4" height="2" fill="#f2d030"/><rect x="9.8" y="11.4" width="2.4" height="2.2" fill="#e84a2c"/><rect x="17.6" y="11.6" width="6" height="11.8" rx="2.8" fill="#4c5866" stroke="#222a32" stroke-width="0.9"/><rect x="20" y="13" width="1.3" height="5" fill="#1c2228"/></svg>
<svg style="left:315.5px;top:405px" width="12" height="14" viewBox="-6 -7 12 14"><path class="chev" d="M-2.9 -2.9L1.8 1.3L-2.9 5.5"/></svg>
<div class="t" style="left:369.12px;top:427px;letter-spacing:-0.228px;">Keyboards</div>
<svg style="left:338px;top:427px" width="24" height="24" viewBox="0 0 24 24"><rect x="0.2" y="4" width="23.8" height="15" fill="#a9b5bd"/><rect x="1.8" y="6" width="20.6" height="9.8" fill="#bcc6cc"/><rect x="2.8" y="6.8" width="2.2" height="1.5" fill="#fff"/><rect x="5.9" y="6.8" width="2.2" height="1.5" fill="#fff"/><rect x="9.0" y="6.8" width="2.2" height="1.5" fill="#fff"/><rect x="12.100000000000001" y="6.8" width="2.2" height="1.5" fill="#fff"/><rect x="15.2" y="6.8" width="2.2" height="1.5" fill="#fff"/><rect x="18.3" y="6.8" width="2.2" height="1.5" fill="#fff"/><rect x="2.8" y="9.5" width="2.2" height="1.5" fill="#fff"/><rect x="5.9" y="9.5" width="2.2" height="1.5" fill="#fff"/><rect x="9.0" y="9.5" width="2.2" height="1.5" fill="#fff"/><rect x="12.100000000000001" y="9.5" width="2.2" height="1.5" fill="#fff"/><rect x="15.2" y="9.5" width="2.2" height="1.5" fill="#fff"/><rect x="18.3" y="9.5" width="2.2" height="1.5" fill="#fff"/><rect x="2.8" y="12.2" width="2.2" height="1.5" fill="#fff"/><rect x="5.9" y="12.2" width="2.2" height="1.5" fill="#fff"/><rect x="9.0" y="12.2" width="2.2" height="1.5" fill="#fff"/><rect x="12.100000000000001" y="12.2" width="2.2" height="1.5" fill="#fff"/><rect x="15.2" y="12.2" width="2.2" height="1.5" fill="#fff"/><rect x="18.3" y="12.2" width="2.2" height="1.5" fill="#fff"/><rect x="5.6" y="14.6" width="12" height="1.3" fill="#fff"/><rect x="0.2" y="16" width="23.8" height="3" fill="#2a3238"/></svg>
<svg style="left:315.5px;top:432px" width="12" height="14" viewBox="-6 -7 12 14"><path class="chev" d="M-2.9 -2.9L1.8 1.3L-2.9 5.5"/></svg>
<div class="t" style="left:369.12px;top:454px;letter-spacing:0.183px;">Mice and other pointing devices</div>
<svg style="left:338px;top:454px" width="24" height="24" viewBox="0 0 24 24"><rect x="5.4" y="0.5" width="13.2" height="22.6" rx="6.4" fill="url(#gMouse)" stroke="#0c0c0c" stroke-width="1.7"/><rect x="10.4" y="3" width="3" height="11" rx="0.8" fill="#2c2c2c"/><path d="M7.4 6C7.2 10 7.2 16 8 19.6" stroke="#c0d0e4" stroke-width="0.9" fill="none"/></svg>
<svg style="left:315.5px;top:459px" width="12" height="14" viewBox="-6 -7 12 14"><path class="chev" d="M-2.9 -2.9L1.8 1.3L-2.9 5.5"/></svg>
<div class="t" style="left:369.12px;top:481px;letter-spacing:0.694px;">Monitors</div>
<svg style="left:338px;top:481px" width="24" height="24" viewBox="0 0 24 24"><rect x="0.7999999999999999" y="4.7" width="22.5" height="13.6" fill="url(#gScr)" stroke="#2d7cb4" stroke-width="1.4"/><rect x="10.8" y="19" width="2.4" height="2" fill="#c4d4e4"/><rect x="6" y="21" width="12" height="1.4" fill="#6c94bc"/></svg>
<svg style="left:315.5px;top:486px" width="12" height="14" viewBox="-6 -7 12 14"><path class="chev" d="M-2.9 -2.9L1.8 1.3L-2.9 5.5"/></svg>
<div class="t" style="left:369.12px;top:508px;letter-spacing:0.039px;">Network adapters</div>
<svg style="left:338px;top:508px" width="24" height="24" viewBox="0 0 24 24"><rect x="6.8" y="1.7" width="16.5" height="10.6" fill="url(#gScr)" stroke="#2d7cb4" stroke-width="1.4"/><rect x="2.4" y="6.7" width="15.999999999999998" height="10.5" fill="url(#gScr)" stroke="#2d7cb4" stroke-width="1.4"/><rect x="0" y="19.2" width="22" height="1.8" fill="#d6d6d6"/><rect x="0" y="22" width="22" height="1.8" fill="#d6d6d6"/><rect x="9.4" y="17.8" width="4.2" height="3" fill="#46c446"/><rect x="6" y="19.4" width="10.6" height="4.2" fill="#48c848"/><rect x="6" y="21.4" width="10.6" height="0.8" fill="#38a838"/></svg>
<svg style="left:315.5px;top:513px" width="12" height="14" viewBox="-6 -7 12 14"><path class="chev" d="M-2.9 -2.9L1.8 1.3L-2.9 5.5"/></svg>
<div class="t" style="left:369.12px;top:535px;letter-spacing:-0.098px;">Print queues</div>
<svg style="left:338px;top:535px" width="24" height="24" viewBox="0 0 24 24"><path d="M3.2 3H20.8L24 7H0Z" fill="#545c64"/><rect x="7" y="4" width="10" height="2.1" rx="0.6" fill="#3cccb4"/><rect x="0" y="7" width="24" height="10.6" fill="#c5cdd5"/><rect x="0" y="7" width="24" height="1.2" fill="#e4e8ec"/><circle cx="20.3" cy="6.6" r="1.1" fill="#2ce02c"/><rect x="0" y="16.4" width="24" height="1.6" fill="#646c74"/><path d="M5.8 10H18.6L19.4 14.6H5Z" fill="#161616"/><path d="M5.6 14.6H18.8L19.6 18.6H4.8Z" fill="#f4f4f4"/><path d="M4.6 18.6H19.8V19.6H4.6Z" fill="#2c2c2c"/></svg>
<svg style="left:315.5px;top:540px" width="12" height="14" viewBox="-6 -7 12 14"><path class="chev" d="M-2.9 -2.9L1.8 1.3L-2.9 5.5"/></svg>
<div class="t" style="left:369.12px;top:562px;letter-spacing:-0.6px;transform:scaleX(0.9858);transform-origin:0 0;">Processors</div>
<svg style="left:338px;top:562px" width="24" height="24" viewBox="0 0 24 24"><rect x="0.8" y="0.2" width="22.4" height="22.3" fill="none" stroke="#e0a83c" stroke-width="1.6" stroke-dasharray="1.5 1.48"/><rect x="1.7" y="1.1" width="20.6" height="20.5" fill="#2f6f51" stroke="#245c42" stroke-width="0.8"/><rect x="2.8" y="2.2" width="18.4" height="18.3" fill="none" stroke="#3c8060" stroke-width="0.8"/><rect x="6" y="5.8" width="12" height="12" fill="url(#gSilver)" stroke="#a8a8a8" stroke-width="0.5"/></svg>
<svg style="left:315.5px;top:567px" width="12" height="14" viewBox="-6 -7 12 14"><path class="chev" d="M-2.9 -2.9L1.8 1.3L-2.9 5.5"/></svg>
<div class="t" style="left:369.12px;top:589px;letter-spacing:-0.6px;transform:scaleX(0.9894);transform-origin:0 0;">Sensors</div>
<svg style="left:338px;top:589px" width="24" height="24" viewBox="0 0 24 24"><rect x="0.2" y="4" width="23.8" height="15" rx="2" fill="#4c4c4c"/><rect x="3" y="5.8" width="18" height="11.8" fill="#c6ebae"/><rect x="10.3" y="5.8" width="1.6" height="11.8" fill="#d8a820"/><rect x="3" y="12.2" width="7.4" height="1.2" fill="#d8a820"/><rect x="11.8" y="10.6" width="9.2" height="1.5" fill="#d8a820"/><rect x="6" y="6.8" width="2.6" height="4.2" rx="1" fill="#ec3c58"/><rect x="3.4" y="15" width="2.2" height="2.2" fill="#9cb894"/></svg>
<svg style="left:315.5px;top:594px" width="12" height="14" viewBox="-6 -7 12 14"><path class="chev" d="M-2.9 -2.9L1.8 1.3L-2.9 5.5"/></svg>
<div class="t" style="left:369.12px;top:616px;letter-spacing:-0.6px;transform:scaleX(0.9812);transform-origin:0 0;">SIMATIC Devices</div>
<svg style="left:338px;top:616px" width="24" height="24" viewBox="0 0 24 24"><rect x="7.7" y="0.2" width="8.6" height="6.2" fill="#cfcfcf" stroke="#b0b0b0" stroke-width="0.7"/><path d="M9 6.4V1.8H10.8V3H13.2V1.8H15V6.4Z" fill="#f6f6f6"/><path d="M6 6.2H17.8V14.6L15 18H9L6 14.6Z" fill="#454545"/><path d="M9 9H15V14L13.8 15.6H10.2L9 14Z" fill="#6e6e6e"/><rect x="9" y="18" width="6" height="6" fill="#4c4c4c"/></svg>
<svg style="left:315.5px;top:622px" width="12" height="12" viewBox="-6 -6 12 12"><path class="chevd" d="M-4.9 -1.9L0 3L4.9 -1.9"/></svg>
<div class="t" style="left:397.56px;top:643px;letter-spacing:-0.6px;transform:scaleX(0.9798);transform-origin:0 0;">SIMATIC PC Adapter USB</div>
<svg style="left:366px;top:643px" width="24" height="24" viewBox="0 0 24 24"><rect x="7.7" y="0.2" width="8.6" height="6.2" fill="#cfcfcf" stroke="#b0b0b0" stroke-width="0.7"/><path d="M9 6.4V1.8H10.8V3H13.2V1.8H15V6.4Z" fill="#f6f6f6"/><path d="M6 6.2H17.8V14.6L15 18H9L6 14.6Z" fill="#454545"/><path d="M9 9H15V14L13.8 15.6H10.2L9 14Z" fill="#6e6e6e"/><rect x="9" y="18" width="6" height="6" fill="#4c4c4c"/></svg>
<div class="t" style="left:369.12px;top:670px;letter-spacing:-0.6px;transform:scaleX(0.9504);transform-origin:0 0;">SIMATIC NET</div>
<svg style="left:338px;top:670px" width="24" height="24" viewBox="0 0 24 24"><rect x="6.8" y="1.7" width="16.5" height="10.6" fill="url(#gScr)" stroke="#2d7cb4" stroke-width="1.4"/><rect x="2.4" y="6.7" width="15.999999999999998" height="10.5" fill="url(#gScr)" stroke="#2d7cb4" stroke-width="1.4"/><rect x="0" y="19.2" width="22" height="1.8" fill="#d6d6d6"/><rect x="0" y="22" width="22" height="1.8" fill="#d6d6d6"/><rect x="9.4" y="17.8" width="4.2" height="3" fill="#46c446"/><rect x="6" y="19.4" width="10.6" height="4.2" fill="#48c848"/><rect x="6" y="21.4" width="10.6" height="0.8" fill="#38a838"/></svg>
<svg style="left:315.5px;top:675px" width="12" height="14" viewBox="-6 -7 12 14"><path class="chev" d="M-2.9 -2.9L1.8 1.3L-2.9 5.5"/></svg>
<div class="t" style="left:369.12px;top:697px;letter-spacing:0.033px;">Software components</div>
<svg style="left:338px;top:697px" width="24" height="24" viewBox="0 0 24 24"><rect x="5.6" y="2.2" width="9.8" height="1.2" fill="#d4d4d4"/><rect x="6" y="3" width="9" height="16" fill="#3a3a3a"/><rect x="9" y="5.6" width="3.2" height="3.3" fill="#38e838"/><rect x="6" y="19" width="9" height="2" fill="#a6a6a6"/><path d="M5.2 21H15.8L16.8 23.6H4.2Z" fill="#1c1c1c"/><path d="M15.2 3.2H17.8V0.4H21V3.2H24V11.4H15.2Z" fill="url(#gPuz)"/><rect x="15.2" y="6.2" width="2.6" height="2.6" fill="#9cc4ec"/><rect x="21.2" y="6.2" width="2.8" height="2.6" fill="#9cc4ec"/></svg>
<svg style="left:315.5px;top:702px" width="12" height="14" viewBox="-6 -7 12 14"><path class="chev" d="M-2.9 -2.9L1.8 1.3L-2.9 5.5"/></svg>
<div class="t" style="left:369.12px;top:724px;letter-spacing:-0.309px;">Software devices</div>
<svg style="left:338px;top:724px" width="24" height="24" viewBox="0 0 24 24"><path d="M6.2 0H17.8L19.4 3.6V23.8H4.6V3.6Z" fill="url(#gSwd)"/><path d="M6.2 0H17.8L19.4 3.6H4.6Z" fill="#c0c8d0"/><rect x="4.6" y="3.6" width="1" height="20.2" fill="#b4bcc4"/><rect x="18.4" y="3.6" width="1" height="20.2" fill="#a4acb4"/><circle cx="12.2" cy="9.2" r="2.7" fill="#6cc4d4" fill-opacity="0.6"/><circle cx="12.2" cy="9.2" r="1.8" fill="#1ce0f8"/></svg>
<svg style="left:315.5px;top:729px" width="12" height="14" viewBox="-6 -7 12 14"><path class="chev" d="M-2.9 -2.9L1.8 1.3L-2.9 5.5"/></svg>
<div class="t" style="left:369.12px;top:751px;letter-spacing:0.033px;">Sound, video and game controllers</div>
<svg style="left:338px;top:751px" width="24" height="24" viewBox="0 0 24 24"><rect x="4.3" y="5.7" width="5" height="11.7" fill="url(#gSpkB)"/><path d="M9 5.6L15.4 0.2V23.5L9 17.5Z" fill="url(#gSpkC)"/><rect x="15.2" y="0.2" width="2.8" height="23.3" fill="url(#gSpkR)"/></svg>
<svg style="left:315.5px;top:756px" width="12" height="14" viewBox="-6 -7 12 14"><path class="chev" d="M-2.9 -2.9L1.8 1.3L-2.9 5.5"/></svg>
<div class="t" style="left:369.12px;top:778px;letter-spacing:0.004px;">Storage controllers</div>
<svg style="left:338px;top:778px" width="24" height="24" viewBox="0 0 24 24"><path d="M11.6 4.6L8.4 1.8L2 8L8.4 14.2L11.6 11.6" fill="none" stroke="#1c1c1c" stroke-width="1.7"/><path d="M9.2 8.2H15.2" stroke="#1c1c1c" stroke-width="1.8"/><path d="M2 14.2L4 16M8 5.8L10 7.2" stroke="#888" stroke-width="0.8"/><rect x="2.2" y="14.4" width="7.4" height="5.4" fill="#c8d0d8"/><path d="M2.8 15.2H6L9.4 18V19.4H2.8Z" fill="#3c3c3c"/><path d="M14.6 12C14.8 9.6 20 9.6 20.2 12Z" fill="#b8bcc0"/><rect x="9" y="12" width="13.5" height="8.7" fill="url(#gPcb)"/><rect x="14" y="15" width="4.2" height="3" fill="#222"/><rect x="11.6" y="13.2" width="1.3" height="1.3" fill="#cfe8d8"/><rect x="18.4" y="13.6" width="1.3" height="1.3" fill="#cfe8d8"/><rect x="19.6" y="16.2" width="1.3" height="1.3" fill="#cfe8d8"/><rect x="11.8" y="18" width="1.3" height="1.3" fill="#cfe8d8"/><rect x="10.5" y="20.7" width="9" height="3.2" fill="#f2a814"/><path d="M13.5 20.7V23.9M16.5 20.7V23.9" stroke="#f8c850" stroke-width="0.6"/><rect x="22.6" y="9" width="1.5" height="15" fill="#a8a8a8"/></svg>
<svg style="left:315.5px;top:783px" width="12" height="14" viewBox="-6 -7 12 14"><path class="chev" d="M-2.9 -2.9L1.8 1.3L-2.9 5.5"/></svg>
<div class="t" style="left:369.12px;top:805px;letter-spacing:-0.456px;">System devices</div>
<svg style="left:338px;top:805px" width="24" height="24" viewBox="0 0 24 24"><rect x="0.3" y="1.4" width="9.8" height="19.6" fill="#a6a6a6"/><rect x="2" y="2.4" width="6.4" height="3.2" fill="#5c5c5c"/><circle cx="3.6" cy="3.8" r="1.1" fill="#38e038"/><rect x="2" y="6.4" width="6.4" height="2.6" fill="#2c2c2c"/><rect x="2" y="9.4" width="6.4" height="1.6" fill="#c8c8c8"/><rect x="2" y="11.6" width="6.4" height="8.4" fill="#343434"/><rect x="6.7" y="7.7" width="16.6" height="11.0" fill="url(#gScr)" stroke="#2d7cb4" stroke-width="1.4"/><rect x="10.5" y="21.2" width="9" height="1" fill="#7c9cc4"/></svg>
<svg style="left:315.5px;top:810px" width="12" height="14" viewBox="-6 -7 12 14"><path class="chev" d="M-2.9 -2.9L1.8 1.3L-2.9 5.5"/></svg>
<div class="t" style="left:369.12px;top:832px;letter-spacing:-0.153px;">Universal Serial Bus controllers</div>
<svg style="left:338px;top:832px" width="24" height="24" viewBox="0 0 24 24"><rect x="7.7" y="0.2" width="8.6" height="6.2" fill="#cfcfcf" stroke="#b0b0b0" stroke-width="0.7"/><path d="M9 6.4V1.8H10.8V3H13.2V1.8H15V6.4Z" fill="#f6f6f6"/><path d="M6 6.2H17.8V14.6L15 18H9L6 14.6Z" fill="#454545"/><path d="M9 9H15V14L13.8 15.6H10.2L9 14Z" fill="#6e6e6e"/><rect x="9" y="18" width="6" height="6" fill="#4c4c4c"/></svg>
<svg style="left:315.5px;top:837px" width="12" height="14" viewBox="-6 -7 12 14"><path class="chev" d="M-2.9 -2.9L1.8 1.3L-2.9 5.5"/></svg>
<div class="t" style="left:369.12px;top:859px;letter-spacing:-0.21px;">USB Connector Managers</div>
<svg style="left:338px;top:859px" width="24" height="24" viewBox="0 0 24 24"><rect x="7.7" y="0.2" width="8.6" height="6.2" fill="#cfcfcf" stroke="#b0b0b0" stroke-width="0.7"/><path d="M9 6.4V1.8H10.8V3H13.2V1.8H15V6.4Z" fill="#f6f6f6"/><path d="M6 6.2H17.8V14.6L15 18H9L6 14.6Z" fill="#454545"/><path d="M9 9H15V14L13.8 15.6H10.2L9 14Z" fill="#6e6e6e"/><rect x="9" y="18" width="6" height="6" fill="#4c4c4c"/></svg>
<svg style="left:315.5px;top:864px" width="12" height="14" viewBox="-6 -7 12 14"><path class="chev" d="M-2.9 -2.9L1.8 1.3L-2.9 5.5"/></svg>
<svg style="left:0;top:0" width="1458" height="200" viewBox="0 0 1458 200"><rect x="1178.2" y="129.6" width="278.9" height="1.5" fill="#fff"/><rect x="1178.2" y="131.1" width="278.9" height="26.8" fill="#f0f0f0"/><rect x="1178.2" y="157.8" width="278.9" height="1.5" fill="#a0a0a0"/><rect x="1178.2" y="159.3" width="278.9" height="1.6" fill="#fff"/></svg>
<div style="left:1178px;top:161px;width:279px;height:37.4px;background:linear-gradient(#bcd3ec,#9bb8d9)"></div>
<div class="t" style="left:1186.04px;top:133px;letter-spacing:-0.6px;transform:scaleX(0.9932);transform-origin:0 0;font-weight:bold;">Actions</div>
<div class="t" style="left:1188.20px;top:169px;letter-spacing:-0.142px;">Device Manager</div>
<div class="t" style="left:1224.12px;top:205px;letter-spacing:0.204px;">More Actions</div>
<svg style="left:1430px;top:170px" width="20" height="60" viewBox="1430 170 20 60"><path d="M1433.2 184.2L1440.4 176.8L1447.6 184.2Z"/><path d="M1437.6 208.8L1444.4 216L1437.6 223.2Z"/></svg>
<div style="left:0;top:962px;width:1458px;height:1.3px;background:#e9e9e9"></div>
<div style="left:1129.2px;top:965px;width:1px;height:22px;background:#dadada"></div>
<div style="left:1329.6px;top:965px;width:1px;height:22px;background:#dadada"></div>
<div style="left:1456.5px;top:965px;width:1px;height:22px;background:#dadada"></div>
</body></html>
